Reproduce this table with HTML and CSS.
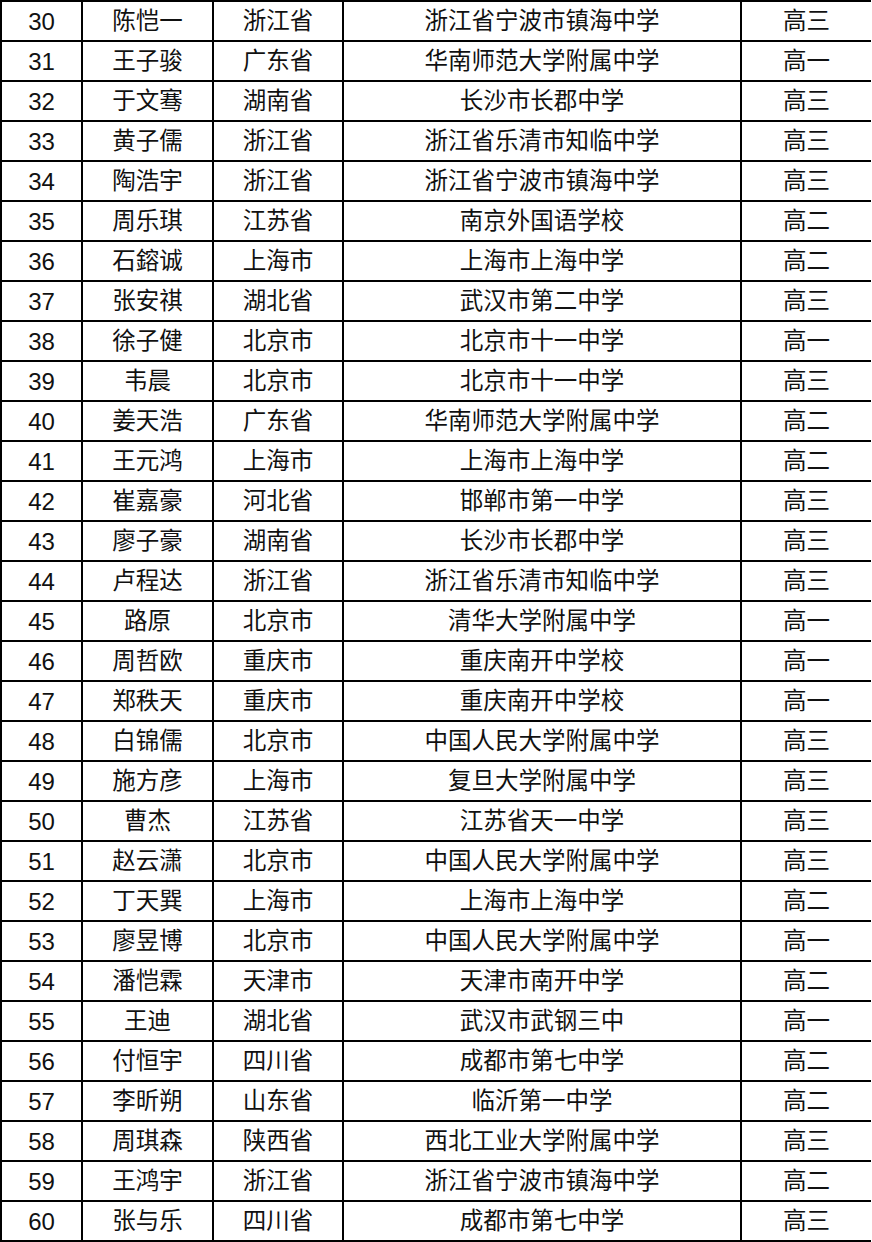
FILE: index.html
```html
<!DOCTYPE html>
<html lang="zh">
<head>
<meta charset="utf-8">
<link rel="stylesheet" href="styles.css">
</head>
<body>
<div class="wrap">
<table class="list">
<colgroup>
<col class="c-no"><col class="c-name"><col class="c-prov"><col class="c-school"><col class="c-grade">
</colgroup>
<tbody>
<tr><td class="num">30</td><td>陈恺一</td><td>浙江省</td><td>浙江省宁波市镇海中学</td><td>高三</td></tr>
<tr><td class="num">31</td><td>王子骏</td><td>广东省</td><td>华南师范大学附属中学</td><td>高一</td></tr>
<tr><td class="num">32</td><td>于文骞</td><td>湖南省</td><td>长沙市长郡中学</td><td>高三</td></tr>
<tr><td class="num">33</td><td>黄子儒</td><td>浙江省</td><td>浙江省乐清市知临中学</td><td>高三</td></tr>
<tr><td class="num">34</td><td>陶浩宇</td><td>浙江省</td><td>浙江省宁波市镇海中学</td><td>高三</td></tr>
<tr><td class="num">35</td><td>周乐琪</td><td>江苏省</td><td>南京外国语学校</td><td>高二</td></tr>
<tr><td class="num">36</td><td>石鎔诚</td><td>上海市</td><td>上海市上海中学</td><td>高二</td></tr>
<tr><td class="num">37</td><td>张安祺</td><td>湖北省</td><td>武汉市第二中学</td><td>高三</td></tr>
<tr><td class="num">38</td><td>徐子健</td><td>北京市</td><td>北京市十一中学</td><td>高一</td></tr>
<tr><td class="num">39</td><td>韦晨</td><td>北京市</td><td>北京市十一中学</td><td>高三</td></tr>
<tr><td class="num">40</td><td>姜天浩</td><td>广东省</td><td>华南师范大学附属中学</td><td>高二</td></tr>
<tr><td class="num">41</td><td>王元鸿</td><td>上海市</td><td>上海市上海中学</td><td>高二</td></tr>
<tr><td class="num">42</td><td>崔嘉豪</td><td>河北省</td><td>邯郸市第一中学</td><td>高三</td></tr>
<tr><td class="num">43</td><td>廖子豪</td><td>湖南省</td><td>长沙市长郡中学</td><td>高三</td></tr>
<tr><td class="num">44</td><td>卢程达</td><td>浙江省</td><td>浙江省乐清市知临中学</td><td>高三</td></tr>
<tr><td class="num">45</td><td>路原</td><td>北京市</td><td>清华大学附属中学</td><td>高一</td></tr>
<tr><td class="num">46</td><td>周哲欧</td><td>重庆市</td><td>重庆南开中学校</td><td>高一</td></tr>
<tr><td class="num">47</td><td>郑秩天</td><td>重庆市</td><td>重庆南开中学校</td><td>高一</td></tr>
<tr><td class="num">48</td><td>白锦儒</td><td>北京市</td><td>中国人民大学附属中学</td><td>高三</td></tr>
<tr><td class="num">49</td><td>施方彦</td><td>上海市</td><td>复旦大学附属中学</td><td>高三</td></tr>
<tr><td class="num">50</td><td>曹杰</td><td>江苏省</td><td>江苏省天一中学</td><td>高三</td></tr>
<tr><td class="num">51</td><td>赵云潇</td><td>北京市</td><td>中国人民大学附属中学</td><td>高三</td></tr>
<tr><td class="num">52</td><td>丁天巽</td><td>上海市</td><td>上海市上海中学</td><td>高二</td></tr>
<tr><td class="num">53</td><td>廖昱博</td><td>北京市</td><td>中国人民大学附属中学</td><td>高一</td></tr>
<tr><td class="num">54</td><td>潘恺霖</td><td>天津市</td><td>天津市南开中学</td><td>高二</td></tr>
<tr><td class="num">55</td><td>王迪</td><td>湖北省</td><td>武汉市武钢三中</td><td>高一</td></tr>
<tr><td class="num">56</td><td>付恒宇</td><td>四川省</td><td>成都市第七中学</td><td>高二</td></tr>
<tr><td class="num">57</td><td>李昕朔</td><td>山东省</td><td>临沂第一中学</td><td>高二</td></tr>
<tr><td class="num">58</td><td>周琪森</td><td>陕西省</td><td>西北工业大学附属中学</td><td>高三</td></tr>
<tr><td class="num">59</td><td>王鸿宇</td><td>浙江省</td><td>浙江省宁波市镇海中学</td><td>高二</td></tr>
<tr><td class="num">60</td><td>张与乐</td><td>四川省</td><td>成都市第七中学</td><td>高三</td></tr>
</tbody>
</table>
</div>
</body>
</html>
```
FILE: styles.css
```css
html, body {
  margin: 0;
  padding: 0;
  background: #fff;
}
.wrap {
  width: 872px;
  overflow: hidden;
}
.list {
  border-collapse: collapse;
  table-layout: fixed;
  width: 870px;
  font-family: "Liberation Sans", "Noto Sans CJK SC", sans-serif;
  font-size: 23.5px;
  color: #111;
}
.c-no { width: 81px; }
.c-name { width: 131px; }
.c-prov { width: 130px; }
.c-school { width: 398px; }
.c-grade { width: 130px; }
.list td {
  border: 2px solid #000;
  height: 36px;
  padding: 2px 0 0 0;
  text-align: center;
  vertical-align: middle;
  line-height: 1;
  white-space: nowrap;
}
.list td:last-child {
  border-right: 0;
}
.list td.num {
  font-size: 24px;
}
```
